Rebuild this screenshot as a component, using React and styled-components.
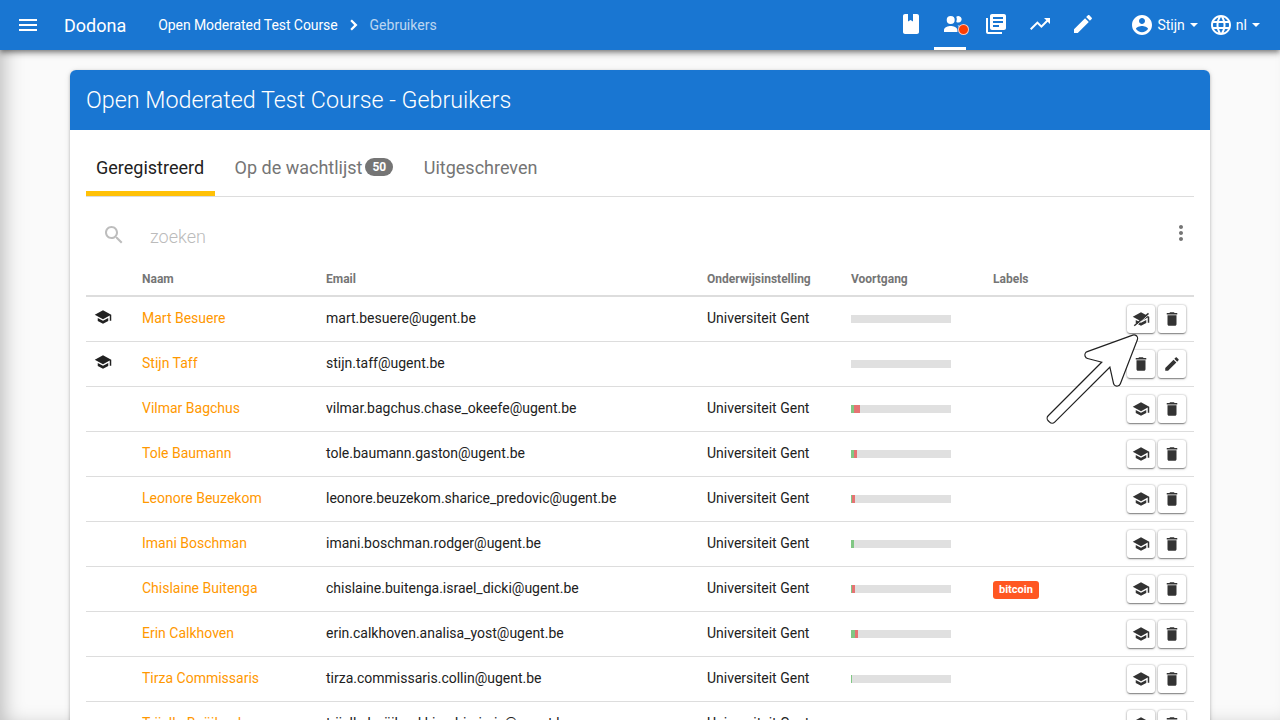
import React from 'react';
import styled, { createGlobalStyle } from 'styled-components'

const GlobalStyle = createGlobalStyle`
    html, body {
        margin: 0;
        height: 100%;
        overflow: hidden;
        background-color: #fafafa;
        font-family: Roboto, sans-serif;
    }
`

const paths = {
    menu: 'M3 18h18v-2H3v2zm0-5h18v-2H3v2zm0-7v2h18V6H3z',
    chevron: 'M9.900 6.500L8.300 8.100 12.200 12l-3.900 3.900 1.600 1.600L15.500 12z',
    book: 'M18 2h-4v7.500l-2.500-1.500L9 9.500V2H6c-1.100 0-2 .9-2 2v16c0 1.100.9 2 2 2h12c1.100 0 2-.9 2-2V4c0-1.100-.9-2-2-2z',
    people: 'M10.700 12a4 4 0 1 0 0-8 4 4 0 0 0 0 8zM4 20v-2c0-2.600 4.200-4 6.700-4s6.700 1.400 6.700 4v2H4zM18.300 10.600a3.300 3.300 0 1 0-2-5.900 6 6 0 0 1 0 5.300c.6.400 1.300.6 2 .6zM17.500 13.200c1.300 1 2 2.600 2 4.800v2H23v-2c0-2.600-3-4.400-5.500-4.800z',
    library: 'M4 6H2v14c0 1.1.9 2 2 2h14v-2H4V6zm16-4H8c-1.1 0-2 .9-2 2v12c0 1.1.9 2 2 2h12c1.1 0 2-.9 2-2V4c0-1.1-.9-2-2-2zm-1 9H9V9h10v2zm-4 4H9v-2h6v2zm4-8H9V5h10v2z',
    trending: 'M16 6l2.29 2.29-4.88 4.88-4-4L2 16.59 3.41 18l6-6 4 4 6.3-6.29L22 12V6z',
    edit: 'M3 17.25V21h3.75L17.81 9.94l-3.75-3.75L3 17.25zM20.71 7.04c.39-.39.39-1.02 0-1.41l-2.34-2.34c-.39-.39-1.02-.39-1.41 0l-1.83 1.83 3.75 3.75 1.83-1.83z',
    account: 'M12 2C6.48 2 2 6.48 2 12s4.48 10 10 10 10-4.48 10-10S17.52 2 12 2zm0 3c1.66 0 3 1.34 3 3s-1.34 3-3 3-3-1.34-3-3 1.34-3 3-3zm0 14.2c-2.5 0-4.71-1.28-6-3.22.03-1.99 4-3.08 6-3.08 1.99 0 5.97 1.09 6 3.08-1.29 1.94-3.5 3.22-6 3.22z',
    language: 'M11.99 2C6.47 2 2 6.48 2 12s4.47 10 9.99 10C17.52 22 22 17.52 22 12S17.52 2 11.99 2zm6.93 6h-2.95c-.32-1.25-.78-2.45-1.38-3.56 1.84.63 3.37 1.91 4.33 3.56zM12 4.04c.83 1.2 1.48 2.53 1.91 3.96h-3.82c.43-1.43 1.08-2.76 1.91-3.96zM4.26 14C4.1 13.36 4 12.69 4 12s.1-1.36.26-2h3.38c-.08.66-.14 1.32-.14 2 0 .68.06 1.34.14 2H4.26zm.82 2h2.95c.32 1.25.78 2.45 1.38 3.56-1.84-.63-3.37-1.9-4.33-3.56zm2.95-8H5.08c.96-1.66 2.49-2.93 4.33-3.56C8.81 5.55 8.35 6.75 8.03 8zM12 19.96c-.83-1.2-1.48-2.53-1.91-3.96h3.82c-.43 1.43-1.08 2.76-1.91 3.96zM14.34 14H9.66c-.09-.66-.16-1.32-.16-2 0-.68.07-1.35.16-2h4.68c.09.65.16 1.32.16 2 0 .68-.07 1.34-.16 2zm.25 5.56c.6-1.11 1.06-2.31 1.38-3.56h2.95c-.96 1.65-2.49 2.93-4.33 3.56zM16.36 14c.08-.66.14-1.32.14-2 0-.68-.06-1.34-.14-2h3.38c.16.64.26 1.31.26 2s-.1 1.36-.26 2h-3.38z',
    school: 'M5 13.18v4L12 21l7-3.82v-4L12 17l-7-3.82zM12 3L1 9l11 6 9-4.91V17h2V9L12 3z',
    schoolOff: 'M5 13.18v4L12 21l7-3.82v-4L12 17l-7-3.82zM12 3L1 9l11 6 9-4.91V17h2V9L12 3z',
    trash: 'M6 19c0 1.1.9 2 2 2h8c1.1 0 2-.9 2-2V7H6v12zM19 4h-3.5l-1-1h-5l-1 1H5v2h14V4z',
    search: 'M15.5 14h-.79l-.28-.27C15.41 12.59 16 11.11 16 9.5 16 5.91 13.09 3 9.5 3S3 5.91 3 9.5 5.91 16 9.5 16c1.61 0 3.09-.59 4.23-1.57l.27.28v.79l5 4.99L20.49 19l-4.99-5zm-6 0C7.01 14 5 11.99 5 9.5S7.01 5 9.5 5 14 7.01 14 9.5 11.99 14 9.5 14z',
    more: 'M12 8c1.1 0 2-.9 2-2s-.9-2-2-2-2 .9-2 2 .9 2 2 2zm0 2c-1.1 0-2 .9-2 2s.9 2 2 2 2-.9 2-2-.9-2-2-2zm0 6c-1.1 0-2 .9-2 2s.9 2 2 2 2-.9 2-2-.9-2-2-2z',
}

const Svg = styled.svg`
    display: block;
    flex: none;
    fill: currentColor;
`

function Icon({ name, size = 24 }) {
    return (
        <Svg width={size} height={size} viewBox="0 0 24 24">
            <path d={paths[name]} fillRule="evenodd" />
            {name === 'schoolOff' && <path d="M4 22L22 6.500" stroke="#fff" strokeWidth="1.2" />}
            {name === 'schoolOff' && <path d="M3 21L22 4.500" stroke="#333" strokeWidth="2" />}
        </Svg>
    )
}

const Page = styled.div`
    position: relative;
    height: 720px;
    overflow: hidden;
    box-shadow: inset 10px 0 20px -6px rgba(0, 0, 0, .25);
`
const Navbar = styled.header`
    height: 50px;
    background-color: #1976d2;
    color: white;
    display: flex;
    align-items: center;
    padding: 0 20px 0 16px;
    box-shadow: 0 2px 4px -1px rgba(0, 0, 0, .3), 0 4px 5px 0 rgba(0, 0, 0, .2), 0 1px 10px 0 rgba(0, 0, 0, .18);
    position: relative;
`
const Brand = styled.span`
    font-size: 18px;
    margin-left: 24px;
    margin-right: 32px;
`
const Crumbs = styled.nav`
    display: flex;
    align-items: center;
    font-size: 14px;
    flex: 1;
`
const CrumbLink = styled.span`
    letter-spacing: -.08px;
    margin-right: 4px;
`
const CrumbMuted = styled.span`
    opacity: .7;
    margin-left: 4px;
`
const NavIcons = styled.div`
    display: flex;
    align-items: center;
    height: 50px;
    gap: 11.5px;
    margin-right: 20px;
`
const NavIcon = styled.div`
    position: relative;
    width: 32px;
    height: 50px;
    display: flex;
    align-items: center;
    justify-content: center;
    box-sizing: border-box;
    border-bottom: 3px solid ${props => props.$active ? 'white' : 'transparent'};
    padding-top: 1px;
    ${props => props.$active && `
        margin: 0 3px 0 -4.5px;
        padding-left: 4px;
    `}
`
const Dot = styled.span`
    position: absolute;
    right: -3px;
    top: 24px;
    width: 9px;
    height: 9px;
    border-radius: 50%;
    background-color: #ff3d00;
    border: 1px solid rgba(255, 255, 255, .7);
`
const NavMenu = styled.div`
    display: flex;
    align-items: center;
    font-size: 14px;
    margin-left: 11px;
    gap: 3px;
`
const Caret = styled.span`
    width: 0;
    height: 0;
    margin-left: 2px;
    border-left: 4px solid transparent;
    border-right: 4px solid transparent;
    border-top: 4px solid white;
`
const Card = styled.main`
    width: 1140px;
    margin: 20px auto 0;
    background-color: white;
    border-radius: 6px 6px 0 0;
    box-shadow: 0 1px 3px rgba(0, 0, 0, .24), 0 1px 6px rgba(0, 0, 0, .1);
`
const CardTitle = styled.h1`
    height: 60px;
    margin: 0;
    box-sizing: border-box;
    padding-left: 16px;
    display: flex;
    align-items: center;
    background-color: #1976d2;
    border-radius: 6px 6px 0 0;
    color: white;
    font-size: 23.3px;
    font-weight: 300;
`
const CardBody = styled.div`
    padding: 0 16px;
`
const Tabs = styled.div`
    display: flex;
    height: 66px;
    gap: 10px;
    border-bottom: 1px solid #ddd;
`
const Tab = styled.div`
    height: 66px;
    box-sizing: border-box;
    padding: 18px 10.5px 5px 10px;
    display: flex;
    align-items: center;
    font-size: 18px;
    color: ${props => props.$active ? '#212121' : '#757575'};
    border-bottom: 5px solid ${props => props.$active ? '#ffc107' : 'transparent'};
`
const Badge = styled.span`
    margin-left: 3px;
    padding: 0 7px;
    height: 18px;
    line-height: 18px;
    border-radius: 9px;
    background-color: #757575;
    color: white;
    font-size: 12px;
    font-weight: 700;
`
const SearchBar = styled.div`
    height: 65px;
    box-sizing: border-box;
    display: flex;
    align-items: center;
    color: #bdbdbd;
    padding: 10px 0 0 16px;
`
const SearchText = styled.span`
    margin-left: 24px;
    font-size: 18px;
    font-weight: 300;
    flex: 1;
    color: #bbb;
    position: relative;
    top: 2px;
`
const MoreButton = styled.div`
    color: #757575;
    margin-right: 1px;
    position: relative;
    top: -2px;
`
const Table = styled.table`
    width: 100%;
    table-layout: fixed;
    border-collapse: collapse;
    font-size: 14px;
    color: #212121;
`
const Th = styled.th`
    height: 34px;
    padding: 0 8px;
    text-align: left;
    font-size: 12px;
    font-weight: 700;
    color: #757575;
    border-bottom: 2px solid #ddd;
    box-sizing: border-box;
    width: ${props => props.$w}px;
`
const Td = styled.td`
    height: 45px;
    padding: 0 8px;
    box-sizing: border-box;
    border-bottom: 1px solid #ddd;
    white-space: nowrap;
`
const TextCell = styled(Td)`
    padding-bottom: 2px;
`
const StaffCell = styled(Td)`
    padding-bottom: 4px;
`
const LabelCell = styled(Td)`
    padding-top: 2px;
`
const NameLink = styled.a`
    color: #ff9800;
`
const Progress = styled.div`
    width: 100px;
    height: 8px;
    background-color: #e0e0e0;
    display: flex;
`
const ProgressPart = styled.div`
    height: 8px;
    background-color: ${props => props.$bad ? '#e57373' : '#81c784'};
`
const Label = styled.span`
    display: inline-block;
    padding: 0 6px;
    height: 18px;
    line-height: 18px;
    border-radius: 3px;
    background-color: #ff5722;
    color: white;
    font-size: 11px;
    font-weight: 700;
`
const Actions = styled.div`
    display: flex;
    justify-content: flex-end;
    gap: 3px;
`
const ActionButton = styled.div`
    width: 28px;
    height: 28px;
    display: flex;
    align-items: center;
    justify-content: center;
    border-radius: 3px;
    background-color: white;
    color: #333;
    box-shadow: 0 1px 1px 0 rgba(0, 0, 0, .14), 0 2px 1px -1px rgba(0, 0, 0, .2), 0 1px 3px 0 rgba(0, 0, 0, .2), 0 0 2px rgba(0, 0, 0, .3);
`
const StaffIcon = styled.div`
    color: #212121;
`
const ArrowSvg = styled.svg`
    position: absolute;
    left: 1040px;
    top: 325px;
`

const arrowPath = 'M94 13.5 L48.5 30 L68.7 35.3 L10.75 93.25 L12.15 94.65 L72 35 L77 57.5 Z'

const users = [
    { name: 'Mart Besuere', email: 'mart.besuere@ugent.be', inst: 'Universiteit Gent', staff: true, actions: ['schoolOff', 'trash'], green: 0, red: 0 },
    { name: 'Stijn Taff', email: 'stijn.taff@ugent.be', inst: '', staff: true, actions: ['trash', 'edit'], green: 0, red: 0 },
    { name: 'Vilmar Bagchus', email: 'vilmar.bagchus.chase_okeefe@ugent.be', inst: 'Universiteit Gent', green: 3, red: 6 },
    { name: 'Tole Baumann', email: 'tole.baumann.gaston@ugent.be', inst: 'Universiteit Gent', green: 3, red: 3 },
    { name: 'Leonore Beuzekom', email: 'leonore.beuzekom.sharice_predovic@ugent.be', inst: 'Universiteit Gent', green: 1, red: 3 },
    { name: 'Imani Boschman', email: 'imani.boschman.rodger@ugent.be', inst: 'Universiteit Gent', green: 3, red: 0 },
    { name: 'Chislaine Buitenga', email: 'chislaine.buitenga.israel_dicki@ugent.be', inst: 'Universiteit Gent', green: 1, red: 3, label: 'bitcoin' },
    { name: 'Erin Calkhoven', email: 'erin.calkhoven.analisa_yost@ugent.be', inst: 'Universiteit Gent', green: 4, red: 3 },
    { name: 'Tirza Commissaris', email: 'tirza.commissaris.collin@ugent.be', inst: 'Universiteit Gent', green: 1, red: 0 },
    { name: 'Trijella Boüjland', email: 'trijella.boüjland.kiarabimirsis@ugent.be', inst: 'Universiteit Gent', green: 0, red: 0 },
]

export default function App(){

    return(
        <Page>
            <GlobalStyle />
            <Navbar>
                <Icon name="menu" />
                <Brand>Dodona</Brand>
                <Crumbs>
                    <CrumbLink>Open Moderated Test Course</CrumbLink>
                    <Icon name="chevron" />
                    <CrumbMuted>Gebruikers</CrumbMuted>
                </Crumbs>
                <NavIcons>
                    <NavIcon><Icon name="book" /></NavIcon>
                    <NavIcon $active><Icon name="people" /><Dot /></NavIcon>
                    <NavIcon><Icon name="library" /></NavIcon>
                    <NavIcon><Icon name="trending" /></NavIcon>
                    <NavIcon><Icon name="edit" /></NavIcon>
                </NavIcons>
                <NavMenu><Icon name="account" />Stijn<Caret /></NavMenu>
                <NavMenu><Icon name="language" />nl<Caret /></NavMenu>
            </Navbar>
            <Card>
                <CardTitle>Open Moderated Test Course - Gebruikers</CardTitle>
                <CardBody>
                    <Tabs>
                        <Tab $active>Geregistreerd</Tab>
                        <Tab>Op de wachtlijst<Badge>50</Badge></Tab>
                        <Tab>Uitgeschreven</Tab>
                    </Tabs>
                    <SearchBar>
                        <Icon name="search" />
                        <SearchText>zoeken</SearchText>
                        <MoreButton><Icon name="more" /></MoreButton>
                    </SearchBar>
                    <Table>
                        <thead>
                            <tr>
                                <Th $w={48}></Th>
                                <Th $w={184}>Naam</Th>
                                <Th $w={381}>Email</Th>
                                <Th $w={144}>Onderwijsinstelling</Th>
                                <Th $w={142}>Voortgang</Th>
                                <Th $w={60}>Labels</Th>
                                <Th></Th>
                            </tr>
                        </thead>
                        <tbody>
                            {users.map(user => (
                                <tr key={user.email}>
                                    <StaffCell>{user.staff && <StaffIcon><Icon name="school" size={18} /></StaffIcon>}</StaffCell>
                                    <TextCell><NameLink>{user.name}</NameLink></TextCell>
                                    <TextCell>{user.email}</TextCell>
                                    <TextCell>{user.inst}</TextCell>
                                    <Td>
                                        <Progress>
                                            <ProgressPart style={{ width: user.green }} />
                                            <ProgressPart $bad style={{ width: user.red }} />
                                        </Progress>
                                    </Td>
                                    <LabelCell>{user.label && <Label>{user.label}</Label>}</LabelCell>
                                    <Td>
                                        <Actions>
                                            {(user.actions || ['school', 'trash']).map(a => (
                                                <ActionButton key={a}><Icon name={a} size={18} /></ActionButton>
                                            ))}
                                        </Actions>
                                    </Td>
                                </tr>
                            ))}
                        </tbody>
                    </Table>
                </CardBody>
            </Card>
            <ArrowSvg width="110" height="110" viewBox="0 0 110 110">
                <path d={arrowPath} fill="none" stroke="#212121" strokeWidth="8.4" strokeLinejoin="round" />
                <path d={arrowPath} fill="white" stroke="white" strokeWidth="6" strokeLinejoin="round" />
            </ArrowSvg>
        </Page>
    )

}
